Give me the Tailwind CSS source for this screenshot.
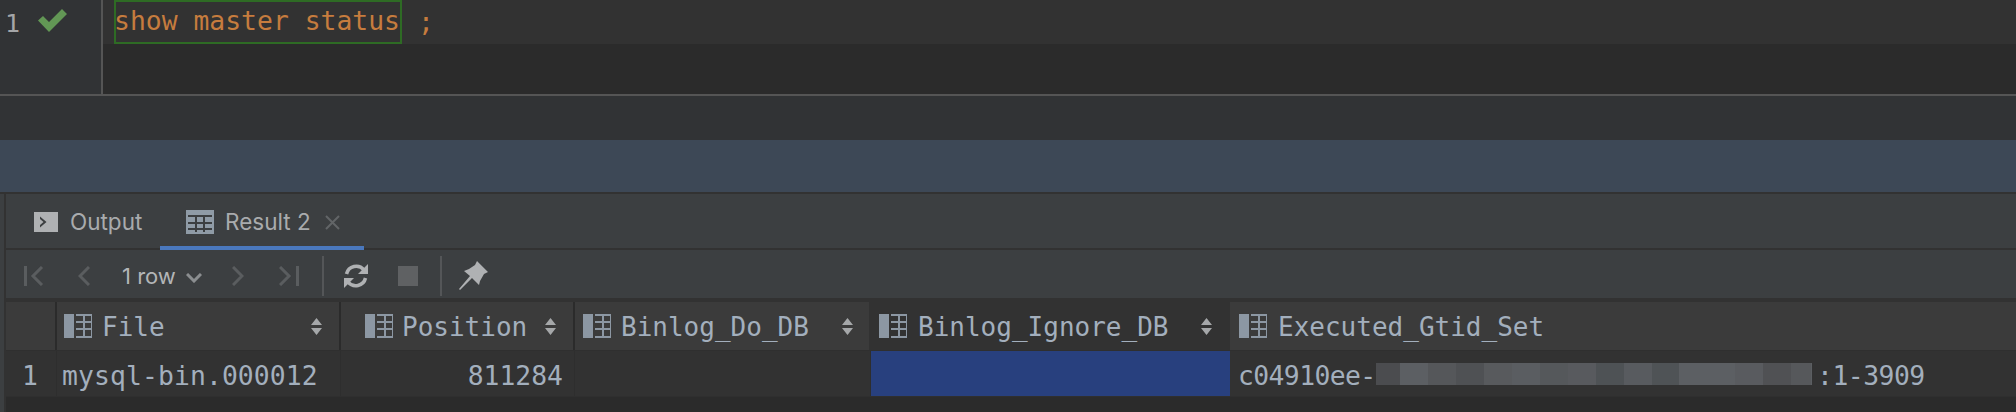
<!doctype html>
<html>
<head>
<meta charset="utf-8">
<script src="https://cdn.jsdelivr.net/npm/@tailwindcss/browser@4"></script>
</head>
<body class="m-0 bg-[#2b2b2b] overflow-hidden">
<div class="w-[2016px] h-[412px] flex flex-col overflow-hidden font-['Inter',sans-serif]">
  <!-- Editor -->
  <div class="h-[94px] flex shrink-0">
    <div class="w-[101px] bg-[#313335] flex items-start shrink-0">
      <span class="ml-[5px] mt-[9px] w-[18px] text-[25px] leading-[30px] text-[#a4a6a8] font-['DejaVu_Sans_Mono',monospace]">1</span>
      <svg class="ml-[15px] mt-[9px]" width="29" height="23" viewBox="0 0 29 23"><path d="M0 11.5 L5 7 L11 13 L24 0 L29 5 L11 23 Z" fill="#629755"/></svg>
    </div>
    <div class="w-[2px] bg-[#555555] shrink-0"></div>
    <div class="flex-1 flex flex-col">
      <div class="h-[44px] bg-[#323232] flex items-center pl-[11px] font-['DejaVu_Sans_Mono',monospace] text-[26.4px] text-[#c67c3e]">
        <span class="h-[44px] w-[288px] border-2 border-[#2e6b24] leading-[38px] whitespace-pre shrink-0 indent-[-2px]">show master status</span><span class="ml-[16px]">;</span>
      </div>
      <div class="flex-1 bg-[#2b2b2b]"></div>
    </div>
  </div>
  <div class="h-[2px] bg-[#555555] shrink-0"></div>
  <div class="h-[44px] bg-[#313335] shrink-0"></div>
  <div class="h-[52px] bg-[#3d4856] shrink-0"></div>
  <div class="h-[2px] bg-[#323232] shrink-0"></div>

  <!-- Tool panel -->
  <div class="flex-1 flex min-h-0">
    <div class="w-[4px] bg-[#3c3f41] border-0 shrink-0"></div>
    <div class="w-[2px] bg-[#323232] shrink-0"></div>
    <div class="flex-1 flex flex-col min-w-0">
      <!-- Tabs -->
      <div class="h-[56px] bg-[#3c3f41] flex shrink-0 border-b-2 border-[#323232]">
        <div class="w-[154px] h-[54px] flex items-center pt-[2px] pl-[28px] shrink-0">
          <svg width="24" height="20" viewBox="0 0 24 20"><path fill-rule="evenodd" d="M0 0H24V20H0Z M6 4.500 L6 7 L9.500 10 L6 13 L6 15.500 L12.500 10 Z" fill="#afb1b3"/></svg>
          <span class="ml-[12px] text-[22.5px] leading-[24px] text-[#a9abad]">Output</span>
        </div>
        <div class="w-[204px] h-[56px] border-b-4 border-[#4a78bd] flex items-center pt-[4px] pl-[26px] shrink-0">
          <svg width="28" height="24" viewBox="0 0 28 24" fill="none"><rect x="0" y="0" width="28" height="24" fill="#8f9ba6"/><path d="M2 6H26M2 13H26M2 19H26M10 6V22M18 6V22" stroke="#3c3f41" stroke-width="2"/><rect x="2" y="2" width="24" height="3" fill="#8f9ba6"/></svg>
          <span class="ml-[11px] w-[84px] text-[22.5px] leading-[24px] text-[#a9abad] whitespace-nowrap">Result 2</span>
          <svg class="ml-[16px]" width="15" height="15" viewBox="0 0 15 15"><path d="M1 1L14 14M14 1L1 14" stroke="#626567" stroke-width="2"/></svg>
        </div>
      </div>
      <!-- Toolbar -->
      <div class="h-[48px] bg-[#3c3f41] flex items-center shrink-0 pt-[4px]">
        <svg class="ml-[18px]" width="20" height="20" viewBox="0 0 20 20" fill="none" stroke="#5a5d5f" stroke-width="3"><path d="M1.500 0V20"/><path d="M18 1L9 10L18 19"/></svg>
        <svg class="ml-[34px]" width="12" height="20" viewBox="0 0 12 20" fill="none" stroke="#5a5d5f" stroke-width="3"><path d="M11 1L2 10L11 19"/></svg>
        <span class="ml-[32px] w-[54px] text-[22px] leading-[24px] text-[#b3b5b7] whitespace-nowrap">1 row</span>
        <svg class="ml-[10px] mt-[4px]" width="16" height="10" viewBox="0 0 16 10" fill="none" stroke="#8b8e90" stroke-width="3"><path d="M1 1L8 8L15 1"/></svg>
        <svg class="ml-[30px]" width="12" height="20" viewBox="0 0 12 20" fill="none" stroke="#5a5d5f" stroke-width="3"><path d="M1 1L10 10L1 19"/></svg>
        <svg class="ml-[35px]" width="20" height="20" viewBox="0 0 20 20" fill="none" stroke="#5a5d5f" stroke-width="3"><path d="M1 1L10 10L1 19"/><path d="M18.500 0V20"/></svg>
        <div class="ml-[23px] w-[2px] h-[40px] bg-[#545658]"></div>
        <svg class="ml-[20px]" width="24" height="24" viewBox="0 0 24 24" fill="none" stroke="#afb1b3" stroke-width="3.500"><path d="M2.500 10A10 10 0 0 1 20 6"/><path d="M21.500 14A10 10 0 0 1 4 18"/><path d="M14 10H24V0Z" fill="#afb1b3" stroke="none"/><path d="M10 14H0V24Z" fill="#afb1b3" stroke="none"/></svg>
        <div class="ml-[30px] w-[20px] h-[20px] bg-[#5f6163]"></div>
        <div class="ml-[22px] w-[2px] h-[40px] bg-[#545658]"></div>
        <svg class="ml-[17px]" width="30" height="30" viewBox="0 0 30 30"><path d="M18 0L29 11L25 13L21 20L20 24L13 17L1 29L0 28L11 15L5 10L10 8L16 4Z" fill="#afb1b3"/></svg>
      </div>
      <div class="h-[4px] bg-[#323232] shrink-0"></div>

      <!-- Table header -->
      <div class="h-[49px] flex shrink-0 font-['DejaVu_Sans_Mono',monospace] text-[26px] leading-[32px] text-[#a3afbd] border-b border-[#2f2f2f]">
        <div class="w-[49px] bg-[#3b3b3b] mr-[2px] shrink-0"></div>
        <div class="w-[282px] bg-[#3b3b3b] mr-[2px] flex items-center pl-[7px] shrink-0">
          <svg width="28" height="24" viewBox="0 0 28 24"><rect width="10" height="24" fill="#8c97a3"/><path d="M12 1H28V23H12M20 1V23M12 8H28M12 15H28" fill="none" stroke="#8c97a3" stroke-width="2"/></svg>
          <span class="ml-[10px] flex-1 pt-[2px]">File</span>
          <svg class="mr-[17px]" width="11" height="17" viewBox="0 0 11 17"><path d="M5.500 0L11 7H0Z M0 10H11L5.500 17Z" fill="#a5a7a9"/></svg>
        </div>
        <div class="w-[232px] bg-[#3b3b3b] mr-[2px] flex items-center pl-[24px] shrink-0">
          <svg width="28" height="24" viewBox="0 0 28 24"><rect width="10" height="24" fill="#8c97a3"/><path d="M12 1H28V23H12M20 1V23M12 8H28M12 15H28" fill="none" stroke="#8c97a3" stroke-width="2"/></svg>
          <span class="ml-[9px] flex-1 pt-[2px]">Position</span>
          <svg class="mr-[17px]" width="11" height="17" viewBox="0 0 11 17"><path d="M5.500 0L11 7H0Z M0 10H11L5.500 17Z" fill="#a5a7a9"/></svg>
        </div>
        <div class="w-[294px] bg-[#3b3b3b] flex items-center pl-[8px] shrink-0">
          <svg width="28" height="24" viewBox="0 0 28 24"><rect width="10" height="24" fill="#8c97a3"/><path d="M12 1H28V23H12M20 1V23M12 8H28M12 15H28" fill="none" stroke="#8c97a3" stroke-width="2"/></svg>
          <span class="ml-[10px] flex-1 pt-[2px]">Binlog_Do_DB</span>
          <svg class="mr-[16px]" width="11" height="17" viewBox="0 0 11 17"><path d="M5.500 0L11 7H0Z M0 10H11L5.500 17Z" fill="#a5a7a9"/></svg>
        </div>
        <div class="w-[361px] bg-[#323232] flex items-center pl-[10px] shrink-0">
          <svg width="28" height="24" viewBox="0 0 28 24"><rect width="10" height="24" fill="#8c97a3"/><path d="M12 1H28V23H12M20 1V23M12 8H28M12 15H28" fill="none" stroke="#8c97a3" stroke-width="2"/></svg>
          <span class="ml-[11px] flex-1 pt-[2px]">Binlog_Ignore_DB</span>
          <svg class="mr-[18px]" width="11" height="17" viewBox="0 0 11 17"><path d="M5.500 0L11 7H0Z M0 10H11L5.500 17Z" fill="#a5a7a9"/></svg>
        </div>
        <div class="flex-1 bg-[#3b3b3b] flex items-center pl-[9px]">
          <svg width="28" height="24" viewBox="0 0 28 24"><rect width="10" height="24" fill="#8c97a3"/><path d="M12 1H28V23H12M20 1V23M12 8H28M12 15H28" fill="none" stroke="#8c97a3" stroke-width="2"/></svg>
          <span class="ml-[11px] pt-[2px]">Executed_Gtid_Set</span>
        </div>
      </div>

      <!-- Row -->
      <div class="h-[46px] flex shrink-0 font-['DejaVu_Sans_Mono',monospace] text-[26.4px] leading-[32px] text-[#a3afbd] bg-[#323232] border-b border-[#2f2f2f]">
        <div class="w-[51px] flex items-center justify-center pt-[4px] pr-[2px] border-r border-[#2e2e2e] shrink-0">1</div>
        <div class="w-[284px] flex items-center pt-[4px] pl-[5px] border-r border-[#2e2e2e] shrink-0 tracking-[0.1px]">mysql-bin.000012</div>
        <div class="w-[234px] flex items-center justify-end pt-[4px] pr-[11px] border-r border-[#2e2e2e] shrink-0">811284</div>
        <div class="w-[296px] border-r border-[#2e2e2e] shrink-0"></div>
        <div class="w-[359px] bg-[#28407e] shrink-0"></div>
        <div class="flex-1 flex items-center pl-[8px]">
          <span class="pt-[4px] w-[138px] tracking-[-0.6px] whitespace-nowrap shrink-0">c04910ee-</span>
          <div class="flex mt-[1px] h-[22px] w-[436px] shrink-0 bg-[#5b5e62]">
            <div class="w-[24px] bg-[#4b4c4f]"></div>
            <div class="w-[28px] bg-[#5c5f63]"></div>
            <div class="w-[28px] bg-[#55575a]"></div>
            <div class="w-[28px] bg-[#4f5154]"></div>
            <div class="w-[28px] bg-[#585a5d]"></div>
            <div class="w-[28px] bg-[#5a5d61]"></div>
            <div class="w-[28px] bg-[#55585b]"></div>
            <div class="w-[28px] bg-[#585a5e]"></div>
            <div class="w-[28px] bg-[#4e5255]"></div>
            <div class="w-[28px] bg-[#585b5f]"></div>
            <div class="w-[27px] bg-[#4f5356]"></div>
            <div class="w-[56px] bg-[#5c5f63]"></div>
            <div class="w-[28px] bg-[#595b5f]"></div>
            <div class="w-[28px] bg-[#505154]"></div>
            <div class="w-[20px] bg-[#56585b]"></div>
          </div>
          <span class="pt-[4px] ml-[5px] tracking-[-0.5px]">:1-3909</span>
        </div>
      </div>
      <div class="flex-1 bg-[#2b2b2b]"></div>
    </div>
  </div>
</div>
</body>
</html>
